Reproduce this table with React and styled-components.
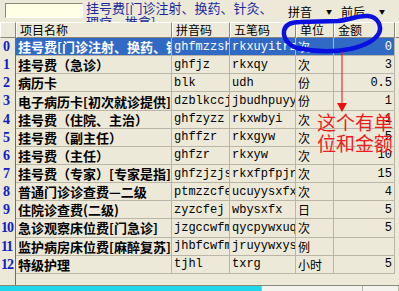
import React from "react";
import styled, { createGlobalStyle } from "styled-components";

const GlobalStyle = createGlobalStyle`
  html, body { margin: 0; padding: 0; }
  body {
    width: 399px;
    height: 291px;
    overflow: hidden;
    background: #ece9d8;
    font-family: "Noto Sans CJK SC", sans-serif;
  }
`;

const COLS = "16px 156px 58px 66px 38px 61px 4px";

const rows = [
  { name: "挂号费[门诊注射、换药、针灸、理疗、推拿]", py: "ghfmzzsh", wb: "rkxuyitrz", unit: "次", amount: "0" },
  { name: "挂号费（急诊）", py: "ghfjz", wb: "rkxqy", unit: "次", amount: "3" },
  { name: "病历卡", py: "blk", wb: "udh", unit: "份", amount: "0.5" },
  { name: "电子病历卡[初次就诊提供]", py: "dzblkccj", wb: "jbudhpuyy", unit: "份", amount: "1" },
  { name: "挂号费（住院、主治）", py: "ghfzyzz", wb: "rkxwbyi", unit: "次", amount: "1" },
  { name: "挂号费（副主任）", py: "ghffzr", wb: "rkxgyw", unit: "次", amount: "5" },
  { name: "挂号费（主任）", py: "ghfzr", wb: "rkxyw", unit: "次", amount: "10" },
  { name: "挂号费（专家）[专家是指]", py: "ghfzjzjs", wb: "rkxfpfpjr", unit: "次", amount: "15" },
  { name: "普通门诊诊查费—二级", py: "ptmzzcfe", wb: "ucuyysxfx", unit: "次", amount: "4" },
  { name: "住院诊查费(二级)", py: "zyzcfej", wb: "wbysxfx", unit: "日", amount: "5" },
  { name: "急诊观察床位费[门急诊]", py: "jzgccwfm", wb: "qycpywxuq", unit: "次", amount: "5" },
  { name: "监护病房床位费[麻醉复苏]", py: "jhbfcwfm", wb: "jruyywxys", unit: "例", amount: "" },
  { name: "特级护理", py: "tjhl", wb: "txrg", unit: "小时", amount: "5" },
];

const Page = styled.div`
  position: relative;
  width: 399px;
  height: 291px;
  display: flex;
  flex-direction: column;
`;

const TopBar = styled.div`
  height: 22px;
  display: flex;
  align-items: flex-start;
`;

const SearchBox = styled.div`
  margin: 3px 0 0 5px;
  width: 76px;
  height: 13px;
  background: #ffffe6;
  border-top: 1px solid #8a877a;
  border-left: 1px solid #8a877a;
  border-right: 1px solid #ffffff;
  border-bottom: 1px solid #ffffff;
`;

const HintText = styled.div`
  margin-left: 3px;
  width: 198px;
  height: 22px;
  overflow: hidden;
  font-size: 13px;
  line-height: 14px;
  padding-top: 1px;
  box-sizing: border-box;
  color: #1a2a9c;
`;

const Options = styled.div`
  margin: 5px 0 0 4px;
  display: flex;
  gap: 9px;
  font-size: 12px;
  line-height: 14px;
  color: #000;
`;

const Drop = styled.span`
  display: flex;
  align-items: center;
  gap: 14px;
  &::after {
    content: "▼";
    font-size: 6px;
  }
`;

const Table = styled.div`
  display: flex;
  flex-direction: column;
`;

const Row = styled.div`
  display: grid;
  grid-template-columns: ${COLS};
  height: ${(p) => (p.$header ? "16px" : "18.15px")};
`;

const HeadCell = styled.div`
  box-sizing: border-box;
  background: #ece9d8;
  border-top: 1px solid #ffffff;
  border-left: 1px solid #ffffff;
  border-right: 1px solid #8a877a;
  border-bottom: 1px solid #8a877a;
  font-size: 12px;
  line-height: 14px;
  padding-left: 3px;
  white-space: nowrap;
  overflow: hidden;
`;

const IndexCell = styled.div`
  box-sizing: border-box;
  background: #ece9d8;
  border-right: 1px solid #6e6c62;
  color: #1020c8;
  font-family: "Liberation Serif", serif;
  font-weight: 700;
  font-size: 14px;
  letter-spacing: -1px;
  padding-left: ${(p) => (p.$wide ? "1px" : "3px")};
  display: flex;
  align-items: center;
`;

const Cell = styled.div`
  box-sizing: border-box;
  background: ${(p) => (p.$selected ? "#316ac5" : "#ece9d8")};
  color: ${(p) => (p.$selected ? "#ffffff" : "#000000")};
  border-right: 1px solid #b9b6a8;
  border-bottom: 1px solid #b9b6a8;
  white-space: nowrap;
  overflow: hidden;
  display: flex;
  align-items: center;
  justify-content: ${(p) => (p.$right ? "flex-end" : "flex-start")};
  padding: ${(p) => (p.$right ? "0 2px 0 0" : "0 0 0 2px")};
  font-family: ${(p) =>
    p.$mono ? '"Liberation Mono", monospace' : '"Noto Sans CJK SC", sans-serif'};
  font-size: ${(p) => (p.$name ? "13px" : "12px")};
  font-weight: ${(p) => (p.$name ? 700 : 400)};
`;

const Filler = styled.div`
  background: #ece9d8;
`;

const Spare = styled.div`
  height: 12px;
  display: grid;
  grid-template-columns: 16px 1fr;
`;

const SpareIndex = styled.div`
  border-right: 1px solid #6e6c62;
`;

const StatusBar = styled.div`
  margin-top: auto;
  height: 5px;
  border-top: 1px solid #8a877a;
  display: grid;
  grid-template-columns: 262px 101px 1fr;
`;

const StatusPart = styled.div`
  background: ${(p) => p.$color};
  border-right: 1px solid #b9b6a8;
`;

const Overlay = styled.svg`
  position: absolute;
  left: 0;
  top: 0;
  pointer-events: none;
`;

const Note = styled.div`
  position: absolute;
  left: 317px;
  top: 111px;
  width: 80px;
  font-size: 19px;
  line-height: 21px;
  color: #ee1c1c;
`;

export default function App() {
  return (
    <>
      <GlobalStyle />
      <Page>
        <TopBar>
          <SearchBox />
          <HintText>挂号费[门诊注射、换药、针灸、理疗、推拿]</HintText>
          <Options>
            <Drop>拼音</Drop>
            <Drop>前后</Drop>
          </Options>
        </TopBar>
        <Table>
          <Row $header>
            <HeadCell />
            <HeadCell>项目名称</HeadCell>
            <HeadCell>拼音码</HeadCell>
            <HeadCell>五笔码</HeadCell>
            <HeadCell>单位</HeadCell>
            <HeadCell>金额</HeadCell>
            <HeadCell />
          </Row>
          {rows.map((r, i) => {
            const sel = i === 0;
            return (
              <Row key={i}>
                <IndexCell $wide={i >= 10}>{i}</IndexCell>
                <Cell $selected={sel} $name>{r.name}</Cell>
                <Cell $selected={sel} $mono>{r.py}</Cell>
                <Cell $selected={sel} $mono>{r.wb}</Cell>
                <Cell $selected={sel}>{r.unit}</Cell>
                <Cell $selected={sel} $mono $right>{r.amount}</Cell>
                <Filler />
              </Row>
            );
          })}
        </Table>
        <Spare>
          <SpareIndex />
          <div />
        </Spare>
        <StatusBar>
          <StatusPart $color="#1fd6ea" />
          <StatusPart $color="#f4f3ee" />
          <StatusPart $color="#f4f3ee" />
        </StatusBar>

        <Overlay width="399" height="291" viewBox="0 0 399 291">
          <path
            d="M300 49 C289 46 283 39 284 31 C285 25 290 22 300 22 L338 21 C350 20 358 15 368 16 C378 17 382 26 379 33 C375 41 363 46 350 49 C335 52 315 52 298 48"
            fill="none"
            stroke="#0a10e0"
            strokeWidth="4.5"
            strokeLinecap="round"
            strokeLinejoin="round"
          />
          <line x1="342" y1="52" x2="342" y2="104" stroke="#e81010" strokeWidth="1" />
          <polygon points="337,103 347,103 342,112" fill="#e81010" />
        </Overlay>
        <Note>
          这个有单
          <br />
          位和金额
        </Note>
      </Page>
    </>
  );
}
